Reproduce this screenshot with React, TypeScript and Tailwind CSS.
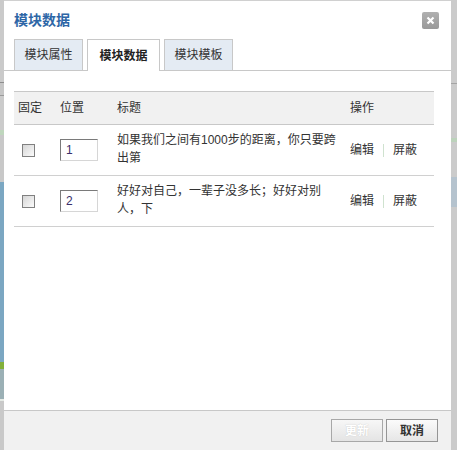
import * as React from 'react';

const FONT = "font-['Liberation_Sans','Noto_Sans_CJK_SC',sans-serif]";

interface Row {
  pos: string;
  title: string;
}

const rows: Row[] = [
  { pos: '1', title: '如果我们之间有1000步的距离，你只要跨出第' },
  { pos: '2', title: '好好对自己，一辈子没多长；好好对别人，下' },
];

function Checkbox() {
  return (
    <span className="block w-[13px] h-[13px] border border-[#808080] bg-gradient-to-br from-[#d6d6d6] to-[#fbfbfb]" />
  );
}

function Tab({ label, active = false, width }: { label: string; active?: boolean; width: string }) {
  if (active) {
    return (
      <div className={`${width} h-[32px] -mb-px flex items-center justify-center bg-white border border-b-0 border-[#c8c8c8] font-bold text-[#222]`}>
        {label}
      </div>
    );
  }
  return (
    <div className={`${width} h-[31px] flex items-center justify-center bg-[#e4ebf3] border border-b-0 border-[#c8c8c8] text-[#333]`}>
      {label}
    </div>
  );
}

export default function App() {
  return (
    <div className={`${FONT} w-[457px] h-[450px] flex overflow-hidden text-[12px] bg-[#c9c9c9]`}>
      {/* page behind the dialog, left */}
      <div className="w-[4px] flex flex-col">
        <div className="h-[82px] bg-[#cacaca]" />
        <div className="h-px bg-[#8d8d8d]" />
        <div className="h-[12px] bg-[#c6c6c6]" />
        <div className="h-px bg-[#9a9a9a]" />
        <div className="h-[34px] bg-[#cbcbcb]" />
        <div className="h-[5px] bg-[#bfd6bd]" />
        <div className="h-[47px] bg-[#c8c8c8]" />
        <div className="h-[180px] bg-[#7ba7c2]" />
        <div className="h-[7px] bg-[#82b03a]" />
        <div className="h-[30px] bg-[#9bb0b5]" />
        <div className="h-[2px] bg-[#e6ebe6]" />
        <div className="flex-1 bg-[#c9c9c9]" />
      </div>

      {/* dialog */}
      <div className="w-[447px] h-full flex flex-col bg-white border-t border-[#d0d0d0]">
        <div className="h-[38px] flex items-start justify-between">
          <h2 className="ml-[10px] mt-[10px] text-[14px] leading-[18px] font-bold text-[#2d66a6]">模块数据</h2>
          <button className="mr-[12px] mt-[11px] w-[17px] h-[17px] rounded-[2px] bg-gradient-to-b from-[#b0b0b0] to-[#999] flex items-center justify-center">
            <svg width="9" height="9" viewBox="0 0 9 9">
              <path d="M1.5 1.5 L7.5 7.5 M7.5 1.5 L1.5 7.5" stroke="#fff" strokeWidth="2.2" />
            </svg>
          </button>
        </div>

        <div className="h-[32px] flex items-end gap-[4px] pl-[10px] border-b border-[#c8c8c8]">
          <Tab label="模块属性" width="w-[69px]" />
          <Tab label="模块数据" width="w-[73px]" active />
          <Tab label="模块模板" width="w-[69px]" />
        </div>

        <div className="flex-1 pt-[20px] pl-[10px]">
          <div className="w-[420px] text-[#333]">
            <div className="h-[34px] flex items-center bg-[#f1f1f1] border-t border-b border-[#c8c8c8]">
              <div className="w-[46px] pl-[4px]">固定</div>
              <div className="w-[57px]">位置</div>
              <div className="w-[232px]">标题</div>
              <div className="flex-1 pl-[1px]">操作</div>
            </div>
            {rows.map((r) => (
              <div key={r.pos} className="h-[51px] flex items-center border-b border-[#d0d0d0]">
                <div className="w-[46px] pl-[8px]">
                  <Checkbox />
                </div>
                <div className="w-[57px]">
                  <div className="w-[38px] h-[22px] flex items-center pl-[5px] border border-t-[#7a7a7a] border-l-[#7a7a7a] border-r-[#d6d6d6] border-b-[#d6d6d6] text-[#3a2f6a]">
                    {r.pos}
                  </div>
                </div>
                <div className="w-[232px]">
                  <p className="w-[224px] leading-[18px] -mt-[2px]">{r.title}</p>
                </div>
                <div className="flex-1 flex items-center pl-[1px]">
                  <span>编辑</span>
                  <span className="mx-[9px] h-[13px] border-l border-[#cfe2cf]" />
                  <span>屏蔽</span>
                </div>
              </div>
            ))}
          </div>
        </div>

        <div className="h-[40px] flex items-center justify-end gap-[3px] pr-[13px] bg-[#f1f1f1] border-t border-[#c8c8c8]">
          <button
            disabled
            className="w-[52px] h-[23px] border border-[#a8a8a8] bg-gradient-to-b from-[#f7f7f7] to-[#e4e4e4] font-bold text-white [text-shadow:0_0_1px_#bbb]"
          >
            更新
          </button>
          <button className="w-[52px] h-[23px] border border-[#959595] bg-gradient-to-b from-[#fbfbfb] to-[#e6e6e6] font-bold text-[#333]">
            取消
          </button>
        </div>
      </div>

      {/* page behind the dialog, right */}
      <div className="w-[6px] flex flex-col">
        <div className="h-[83px] bg-[#cbcbcb]" />
        <div className="h-px bg-[#a4a4a4]" />
        <div className="h-[54px] bg-[#cbcbcb]" />
        <div className="h-[4px] bg-[#bcd2bb]" />
        <div className="h-[35px] bg-[#cbcbcb]" />
        <div className="h-[30px] bg-[#b5c3ce]" />
        <div className="flex-1 bg-[#cbcbcb]" />
      </div>
    </div>
  );
}
